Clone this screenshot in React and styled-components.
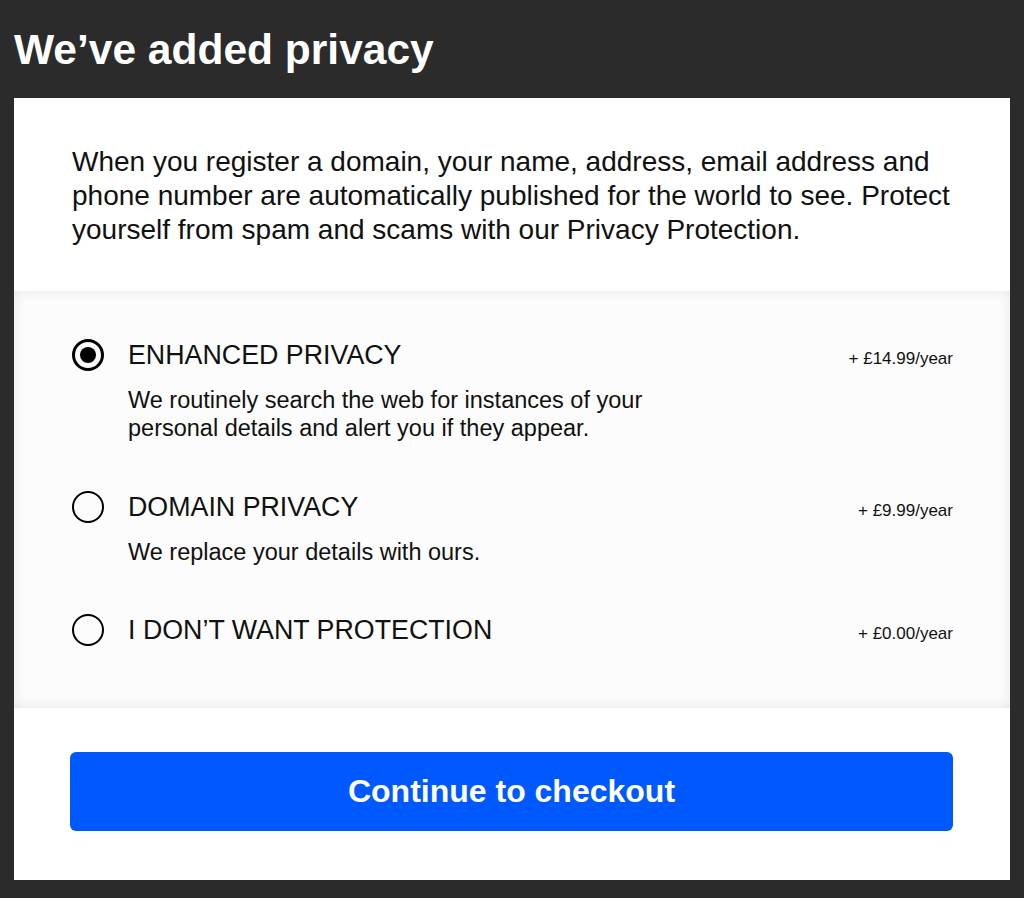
import React, { useState } from "react";
import styled, { createGlobalStyle } from "styled-components";

const Global = createGlobalStyle`
  html, body { margin: 0; padding: 0; background: #2b2b2b; }
  body { font-family: "Liberation Sans", Arial, Helvetica, sans-serif; -webkit-font-smoothing: antialiased; }
  * { box-sizing: border-box; }
`;

const Page = styled.div`
  padding: 25px 14px 18px;
  min-height: 898px;
`;

const Heading = styled.h1`
  margin: 0 0 23px;
  font-size: 42.5px;
  line-height: 50px;
  font-weight: 700;
  color: #fff;
`;

const Card = styled.div`
  background: #fff;
  display: flex;
  flex-direction: column;
`;

const Intro = styled.p`
  margin: 0;
  padding: 47px 50px 44px 58px;
  font-size: 28px;
  line-height: 34px;
  color: #111;
`;

const Options = styled.div`
  background: #fcfcfc;
  box-shadow: inset 0 0 14px rgba(0, 0, 0, 0.09);
  padding: 48px 57px 62px 58px;
  display: flex;
  flex-direction: column;
  gap: 48.5px;
`;

const Option = styled.label`
  display: grid;
  grid-template-columns: 56px 1fr;
  cursor: pointer;
`;

const Radio = styled.span`
  width: 32px;
  height: 32px;
  margin-top: 0px;
  border-radius: 50%;
  border: ${(p) => (p.$checked ? "3px" : "2.5px")} solid #000;
  display: flex;
  align-items: center;
  justify-content: center;
  &::after {
    content: "";
    width: 16px;
    height: 16px;
    border-radius: 50%;
    background: #000;
    display: ${(p) => (p.$checked ? "block" : "none")};
  }
`;

const Content = styled.div`
  display: flex;
  flex-direction: column;
  gap: 15px;
`;

const Header = styled.div`
  display: flex;
  justify-content: space-between;
  align-items: baseline;
`;

const Title = styled.span`
  font-size: 26.8px;
  line-height: 32px;
  color: #111;
`;

const Price = styled.span`
  font-size: 17px;
  color: #111;
`;

const Desc = styled.p`
  margin: 0;
  max-width: 560px;
  font-size: 23.5px;
  line-height: 28px;
  color: #111;
`;

const Footer = styled.div`
  padding: 44px 57px 49px 56px;
`;

const Button = styled.button`
  width: 100%;
  height: 79px;
  border: none;
  border-radius: 6px;
  background: #0059ff;
  color: #fff;
  font-family: inherit;
  font-size: 32px;
  font-weight: 700;
  display: flex;
  align-items: center;
  justify-content: center;
  cursor: pointer;
`;

const options = [
  {
    id: "enhanced",
    title: "ENHANCED PRIVACY",
    price: "+ £14.99/year",
    desc: "We routinely search the web for instances of your personal details and alert you if they appear.",
  },
  {
    id: "domain",
    title: "DOMAIN PRIVACY",
    price: "+ £9.99/year",
    desc: "We replace your details with ours.",
  },
  {
    id: "none",
    title: "I DON’T WANT PROTECTION",
    price: "+ £0.00/year",
  },
];

export default function App() {
  const [selected, setSelected] = useState("enhanced");
  return (
    <>
      <Global />
      <Page>
        <Heading>We’ve added privacy</Heading>
        <Card>
          <Intro>
            When you register a domain, your name, address, email address and
            phone number are automatically published for the world to see.
            Protect yourself from spam and scams with our Privacy Protection.
          </Intro>
          <Options>
            {options.map((o) => (
              <Option key={o.id} onClick={() => setSelected(o.id)}>
                <Radio $checked={selected === o.id} />
                <Content>
                  <Header>
                    <Title>{o.title}</Title>
                    <Price>{o.price}</Price>
                  </Header>
                  {o.desc && <Desc>{o.desc}</Desc>}
                </Content>
              </Option>
            ))}
          </Options>
          <Footer>
            <Button>Continue to checkout</Button>
          </Footer>
        </Card>
      </Page>
    </>
  );
}
